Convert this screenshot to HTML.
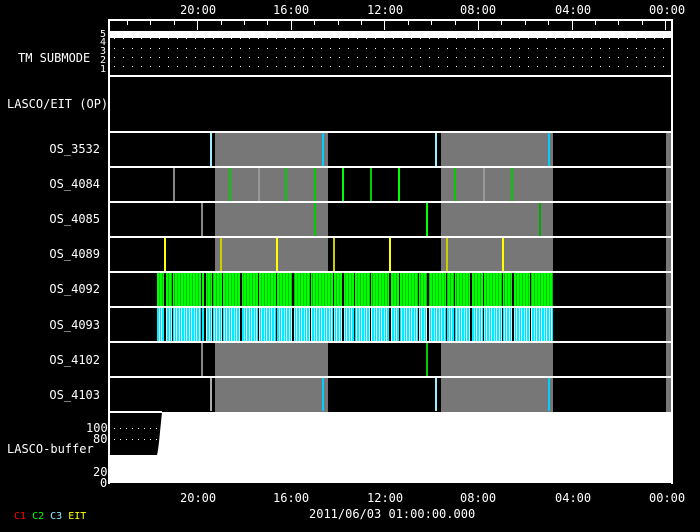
<!DOCTYPE html>
<html><head><style>
body{margin:0;background:#000;width:700px;height:532px;overflow:hidden;position:relative;font-family:"DejaVu Sans Mono","Liberation Mono",monospace;color:#fff}
.a{position:absolute}
.t{position:absolute;font-size:12px;line-height:12px;white-space:nowrap}
.r{text-align:right}
.h{position:absolute;left:108px;width:563px;height:2px;background:#fff}
.v{position:absolute;width:2px;height:33px}
.d{position:absolute;height:1px;background-image:repeating-linear-gradient(90deg,#fff 0 1px,transparent 1px 9px)}
</style></head><body>
<div class="a" style="left:108px;top:19px;width:561px;height:463px;border:2px solid #fff;border-bottom:none"></div>
<div class="t" style="left:180px;top:4px">20:00</div>
<div class="t" style="left:273px;top:4px">16:00</div>
<div class="t" style="left:367px;top:4px">12:00</div>
<div class="t" style="left:460px;top:4px">08:00</div>
<div class="t" style="left:555px;top:4px">04:00</div>
<div class="t" style="left:649px;top:4px">00:00</div>
<div id="ticks"></div>
<div class="a" style="left:109px;top:31px;width:562px;height:7px;background:#fff"></div>
<div class="d" style="left:114px;top:38px;width:556px"></div>
<div class="d" style="left:114px;top:48px;width:556px"></div>
<div class="d" style="left:114px;top:57px;width:556px"></div>
<div class="d" style="left:114px;top:66px;width:556px"></div>
<div class="t" style="left:100px;top:29px;font-size:10px">5</div>
<div class="t" style="left:100px;top:37px;font-size:10px">4</div>
<div class="t" style="left:100px;top:46px;font-size:10px">3</div>
<div class="t" style="left:100px;top:55px;font-size:10px">2</div>
<div class="t" style="left:100px;top:64px;font-size:10px">1</div>
<div class="t" style="left:18px;top:52px">TM SUBMODE</div>
<div class="h" style="top:75px"></div>
<div class="t" style="left:7px;top:98px">LASCO/EIT (OP)</div>
<div class="a" style="left:215px;top:133px;width:113px;height:279px;background:#777"></div>
<div class="a" style="left:441px;top:133px;width:112px;height:279px;background:#777"></div>
<div class="a" style="left:666px;top:133px;width:5px;height:279px;background:#777"></div>
<div class="a" style="left:157px;top:273px;width:396px;height:34px;background:repeating-linear-gradient(90deg,#0f0 0 2px,#0c0 2px 3px,#0f0 3px 5px,#0b0 5px 6px)"></div>
<div class="a" style="left:157px;top:308px;width:396px;height:34px;background:repeating-linear-gradient(90deg,#0ef 0 2px,#bef 2px 3px,#0df 3px 4px,#dff 4px 5px)"></div>
<div id="gaps"></div>
<div class="h" style="top:131px"></div><div class="h" style="top:166px"></div><div class="h" style="top:201px"></div><div class="h" style="top:236px"></div><div class="h" style="top:271px"></div><div class="h" style="top:306px"></div><div class="h" style="top:341px"></div><div class="h" style="top:376px"></div><div class="h" style="top:411px;width:54px"></div>
<div id="ev"></div>
<div class="t r" style="right:600px;top:143px;width:100px">OS_3532</div>
<div class="t r" style="right:600px;top:178px;width:100px">OS_4084</div>
<div class="t r" style="right:600px;top:213px;width:100px">OS_4085</div>
<div class="t r" style="right:600px;top:248px;width:100px">OS_4089</div>
<div class="t r" style="right:600px;top:283px;width:100px">OS_4092</div>
<div class="t r" style="right:600px;top:319px;width:100px">OS_4093</div>
<div class="t r" style="right:600px;top:354px;width:100px">OS_4102</div>
<div class="t r" style="right:600px;top:389px;width:100px">OS_4103</div>
<svg class="a" style="left:108px;top:412px" width="564" height="72"><polygon points="54,0 564,0 564,71 0,71 0,43 49,43 50,38 51,30 52,20 53,10" fill="#fff"/></svg>
<div class="d" style="left:114px;top:428px;width:44px;background-image:repeating-linear-gradient(90deg,#fff 0 1px,transparent 1px 6px)"></div>
<div class="d" style="left:114px;top:439px;width:44px;background-image:repeating-linear-gradient(90deg,#fff 0 1px,transparent 1px 6px)"></div>
<div class="t" style="left:86px;top:422px">100</div>
<div class="t" style="left:93px;top:433px">80</div>
<div class="t" style="left:7px;top:443px">LASCO-buffer</div>
<div class="t" style="left:93px;top:466px">20</div>
<div class="t" style="left:100px;top:477px">0</div>
<div class="t" style="left:180px;top:492px">20:00</div>
<div class="t" style="left:273px;top:492px">16:00</div>
<div class="t" style="left:367px;top:492px">12:00</div>
<div class="t" style="left:460px;top:492px">08:00</div>
<div class="t" style="left:555px;top:492px">04:00</div>
<div class="t" style="left:649px;top:492px">00:00</div>
<div class="t" style="left:309px;top:508px">2011/06/03 01:00:00.000</div>
<div class="t" style="left:14px;top:511px;font-size:10px"><span style="color:#f00">C1</span> <span style="color:#0f0">C2</span> <span style="color:#9ef">C3</span> <span style="color:#ff0">EIT</span></div>
<script>
var t='';for(var i=0;i<24;i++){var x=127+i*23.4;var maj=(i%4==3);t+='<div class="a" style="left:'+x.toFixed(0)+'px;top:20px;width:1px;height:'+(maj?10:5)+'px;background:#fff"></div>';}
document.getElementById('ticks').innerHTML=t;
var rows=[[133,[[210,'#9ef'],[322,'#0cf'],[435,'#9ef'],[548,'#0cf']]],
[168,[[173,'#888'],[229,'#0c0'],[258,'#999'],[285,'#0c0'],[314,'#0c0'],[342,'#0f0'],[370,'#0c0'],[398,'#0f0'],[454,'#0c0'],[483,'#999'],[511,'#0c0']]],
[203,[[201,'#888'],[314,'#0c0'],[426,'#0f0'],[539,'#0a0']]],
[238,[[164,'#ff0'],[220,'#cc0'],[276,'#ff0'],[333,'#cc0'],[389,'#ff0'],[446,'#cc0'],[502,'#ff0']]],
[343,[[201,'#888'],[426,'#0c0']]],
[378,[[210,'#aaa'],[322,'#0cf'],[435,'#9ef'],[548,'#0cf']]]];
var e='';rows.forEach(function(r){r[1].forEach(function(p){e+='<div class="v" style="left:'+p[0]+'px;top:'+r[0]+'px;background:'+p[1]+'"></div>';});});
document.getElementById('ev').innerHTML=e;
var g='',gx=[164,172,201,204,212,222,240,258,276,292,310,333,342,354,370,389,399,418,427,446,454,470,483,502,512,530];
gx.forEach(function(x,i){g+='<div class="a" style="left:'+x+'px;top:273px;width:'+(i%3?1:2)+'px;height:69px;background:#000"></div>';});
document.getElementById('gaps').innerHTML=g;
</script>
</body></html>
